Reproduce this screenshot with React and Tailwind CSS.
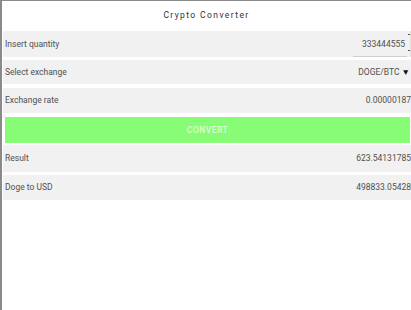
import React from 'react'

function Row({ label, children, className = "" }) {
  return (
    <div className={`flex items-center justify-between bg-[#f1f1f1] pl-[2px] ${className}`}>
      <span className="text-[8.5px] text-[#505050]">{label}</span>
      {children}
    </div>
  )
}

export default function App() {
  return (
    <div
      className="w-[411px] h-[310px] bg-white border-t border-l-2 border-[#8a8a8a] overflow-hidden"
      style={{ fontFamily: 'Roboto, "Liberation Sans", sans-serif' }}
    >
      <div className="h-[30px] pb-[2px] flex items-center justify-center text-[8.5px] tracking-[1.4px] text-[#333]">
        Crypto Converter
      </div>

      <div className="flex flex-col pl-[1px]">
        <Row label="Insert quantity" className="h-[26px]">
          <div className="relative h-full flex items-center">
            <span className="text-[8.5px] text-[#505050] pr-[6px]">333444555</span>
            <div className="absolute right-[1px] top-[3px] w-[2px] h-[1px] bg-[#555]" />
            <div className="absolute right-[1px] bottom-[6px] w-[2px] h-[1px] bg-[#555]" />
            <div className="absolute right-0 top-0 bottom-0 w-px bg-[#e2e2e2]" />
            <div className="absolute right-[4px] bottom-0 w-[54px] h-px bg-[#cfcfcf]" />
          </div>
        </Row>

        <Row label="Select exchange" className="h-[24px] mt-[3px]">
          <span className="text-[8.5px] text-[#505050] pr-px">
            DOGE/BTC <span className="text-[8.5px] text-[#111]">▼</span>
          </span>
        </Row>

        <Row label="Exchange rate" className="h-[25px] mt-[4px]">
          <span className="text-[8.5px] text-[#505050]">0.00000187</span>
        </Row>

        <div className="flex items-center justify-center h-[26px] mt-[4px] ml-[2px] mr-px bg-[#88fc76] text-[8.5px] font-medium tracking-[0.5px] text-[#dcffd6]">
          CONVERT
        </div>

        <Row label="Result" className="h-[27px] mt-[2px]">
          <span className="text-[8.5px] text-[#505050]">623.54131785</span>
        </Row>

        <Row label="Doge to USD" className="h-[25px] mt-[3px]">
          <span className="text-[8.5px] text-[#505050]">498833.05428</span>
        </Row>
      </div>
    </div>
  )
}
